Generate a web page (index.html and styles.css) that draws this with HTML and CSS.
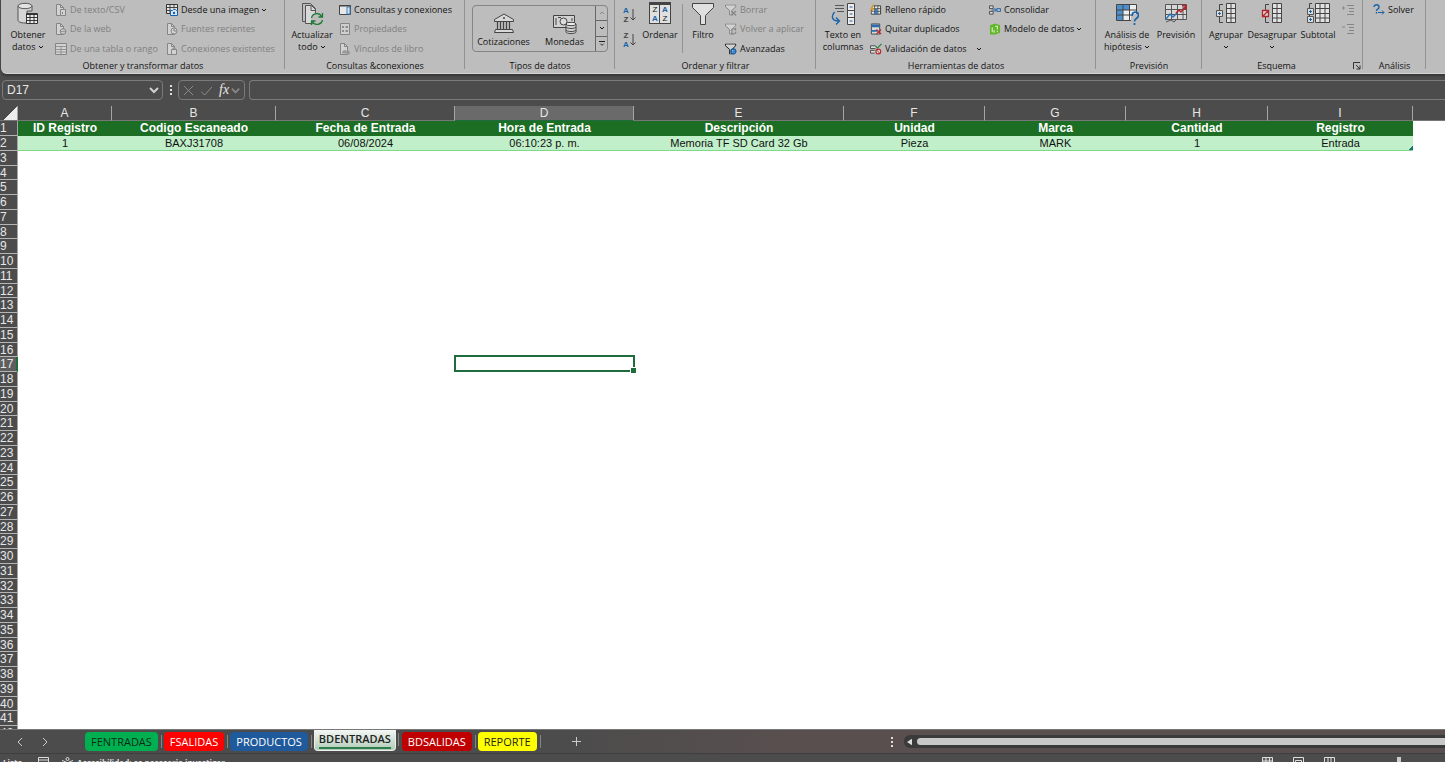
FILE: index.html
```html
<!DOCTYPE html>
<html lang="es">
<head>
<meta charset="utf-8">
<title>BDENTRADAS</title>
<link rel="stylesheet" href="styles.css">
</head>
<body>
<svg class="defs" aria-hidden="true">
  <symbol id="chev" viewBox="0 0 6 6"><path d="M1 2l2 2 2-2" fill="none" stroke="currentColor"/></symbol>
  <symbol id="page" viewBox="0 0 12 12"><path d="M1.500.500h4l3 3v8h-7z" fill="#d2d2d2" stroke="#858585"/><path d="M5.500.500v3h3" fill="none" stroke="#858585"/></symbol>
  <symbol id="csv" viewBox="0 0 12 12"><use href="#page"/><path d="M5.500 5.500h5v6h-5z" fill="#d2d2d2" stroke="#858585"/><path d="M7.500 8v2" stroke="#858585"/></symbol>
  <symbol id="web" viewBox="0 0 12 12"><use href="#page"/><circle cx="8" cy="8.500" r="2.800" fill="#c8c8c8" stroke="#858585"/><path d="M5 8.500h6" stroke="#858585" stroke-width=".7"/></symbol>
  <symbol id="recent" viewBox="0 0 12 12"><use href="#page"/><circle cx="8" cy="8" r="3" fill="#d2d2d2" stroke="#858585"/><path d="M8 6v2h2" fill="none" stroke="#858585"/></symbol>
  <symbol id="conn" viewBox="0 0 12 12"><use href="#page"/><path d="M5.500 6.500h5v5h-5zM7 6.500v-1.500h2v1.500" fill="#d2d2d2" stroke="#858585"/></symbol>
  <symbol id="link" viewBox="0 0 12 12"><use href="#page"/><path d="M3 10.500c0-4 3-4 6-2v-1.500l2.500 3-2.500 2v-1.500z" fill="#999"/></symbol>
  <symbol id="tbl" viewBox="0 0 12 12"><path d="M.500.500h11v11H.500z" fill="#d2d2d2" stroke="#858585"/><path d="M.500 3.500h11M.500 6.500h11M.500 9h11M6 3v9" stroke="#858585" stroke-width=".8"/></symbol>
  <symbol id="img" viewBox="0 0 12 12"><path d="M.500.500h11v9H.500z" fill="#e4e4e4" stroke="#333"/><path d="M.500 3.500h11M.500 6.500h5M4 .500v9M8 .500v4" stroke="#333" stroke-width=".9"/><path d="M4.500 6.500h2l1-1h2l1 1h1v5h-7z" fill="#d8e6f2" stroke="#1b63a8"/><circle cx="8" cy="9" r="1.200" fill="#1b63a8"/></symbol>
  <symbol id="panel" viewBox="0 0 12 12"><path d="M.500 1.500h11v9H.500z" fill="#e8e8e8" stroke="#444"/><path d="M8 3h3v7H8z" fill="#d6e4f0" stroke="#3b83c0"/><path d="M0 2h12" stroke="#444"/></symbol>
  <symbol id="props" viewBox="0 0 12 12"><path d="M1.500.500h9v11h-9z" fill="#cfcfcf" stroke="#858585"/><path d="M3 4h2M3 8h2M6.500 4h2.500M6.500 8h2.500" stroke="#777" stroke-width="1.400"/></symbol>
  <symbol id="db" viewBox="0 0 24 24"><path d="M2 4v14c0 2 3 3 7 3h2V9h5V4" fill="#d6d6d6" stroke="#555"/><ellipse cx="9" cy="4" rx="7" ry="2.700" fill="#e2e2e2" stroke="#555"/><path d="M10.500 11.500h11v10h-11z" fill="#eee" stroke="#333"/><path d="M10 12.500h12M10.500 15.500h11M10.500 18.500h11M14 12v10M18 12v10" stroke="#333"/></symbol>
  <symbol id="refresh" viewBox="0 0 24 24"><path d="M2.500 1.500h8l5 5v3M2.500 1.500v18h3" fill="none" stroke="#555"/><path d="M5.500 3.500h6l4 4v14h-10z" fill="#d8d8d8" stroke="#555"/><path d="M11 3.500v5h5" fill="none" stroke="#555"/><circle cx="17" cy="17" r="6" fill="#bdbdbd"/><path d="M11.500 16c1-5 8-6 10-1.500M22.500 11v4h-4M22.500 18c-1 5-8 6-10 1.500M11.500 23v-4h4" fill="none" stroke="#1d7a35" stroke-width="1.300"/></symbol>
  <symbol id="bank" viewBox="0 0 24 24"><path d="M2.500 8.500L12 3l9.500 5.500v2h-19zM3.500 18.500h17l1 3h-19z" fill="#d8d8d8" stroke="#444"/><path d="M5.500 11v7M8.500 11v7M11.500 11v7M14.500 11v7M17.500 11v7" stroke="#444" stroke-width="1.200"/><circle cx="12" cy="7" r="1" fill="#444"/></symbol>
  <symbol id="money" viewBox="0 0 24 24"><path d="M.500 4.500h21v12H.500z" fill="#d2d2d2" stroke="#444"/><path d="M3 7v7M19 7v3M5 6.500h3" stroke="#444"/><circle cx="10.500" cy="10.500" r="3.500" fill="#ddd" stroke="#444"/><path d="M13 13v8c0 2 10 2 10 0v-8" fill="#d2d2d2" stroke="#444"/><ellipse cx="18" cy="13" rx="5" ry="1.700" fill="#eee" stroke="#444"/><path d="M13 16c1 2 9 2 10 0M13 19c1 2 9 2 10 0" fill="none" stroke="#444"/></symbol>
  <symbol id="arrow" viewBox="0 0 6 14"><path d="M3 1v11M.500 9.500L3 12l2.500-2.500" fill="none" stroke="#444"/></symbol>
  <symbol id="funnel" viewBox="0 0 24 24"><path d="M1.500 1.500h21v4l-8 8v9h-5v-9l-8-8z" fill="#e0e0e0" stroke="#444"/></symbol>
  <symbol id="funs" viewBox="0 0 13 12"><path d="M.500.500h11v2l-4 4v5H5v-5l-4.500-4z" fill="#d2d2d2" stroke="currentColor"/></symbol>
  <symbol id="fclear" viewBox="0 0 13 12"><use href="#funs"/><path d="M7 7l5 5M12 7l-5 5" stroke="#858585" stroke-width="1.300"/></symbol>
  <symbol id="freap" viewBox="0 0 13 12"><use href="#funs"/><path d="M6.500 8c1-3 4-3 5-.500V5M12 9c-1 3-4 3-5 1v2" fill="none" stroke="#858585" stroke-width="1.200"/></symbol>
  <symbol id="fadv" viewBox="0 0 13 12"><use href="#funs"/><circle cx="9" cy="8.500" r="2.500" fill="#d8e6f2" stroke="#1b63a8" stroke-width="1.700"/><path d="M9 5v7M5.500 8.500h7" stroke="#1b63a8" stroke-width=".8"/></symbol>
  <symbol id="textcol" viewBox="0 0 24 24"><path d="M4 3.500h9M4 6.500h9M6 9.500h7" stroke="#555"/><path d="M3.500 10c-4 5-2 9 4 9M5 15.500L8.500 19 5 22.500" fill="none" stroke="#1b63a8" stroke-width="1.400"/><path d="M16.500 1.500h7v21h-7z" fill="#eee" stroke="#444"/><path d="M16.500 8.500h7M16.500 15.500h7" stroke="#444"/><path d="M18.500 5h3M18.500 12h3M18.500 19h3" stroke="#1b63a8"/></symbol>
  <symbol id="flash" viewBox="0 0 13 12"><path d="M3.500 1.500h8v9h-10v-6z" fill="#eee" stroke="#333"/><path d="M1.500 4.500h10M1.500 7.500h10M5 1.500v9M8.500 1.500v9" stroke="#333" stroke-width=".8"/><path d="M5 5h3v6H5z" fill="#3977b5"/><path d="M3 0L0 6h2l-1 4 4-6H3l2-4z" fill="#d49a3a"/></symbol>
  <symbol id="dup" viewBox="0 0 13 12"><path d="M1.500.500h9v11h-9z" fill="#d8d8d8" stroke="#444"/><path d="M2 1h8v3H2zM2 7h6v2H2z" fill="#2a6cb0"/><path d="M7 6.500l5 5M12 6.500l-5 5" stroke="#b3262c" stroke-width="1.300"/></symbol>
  <symbol id="valid" viewBox="0 0 13 12"><path d="M6 2.500H.500v3H6M5 7.500H.500v3H5" fill="#ddd" stroke="#444"/><path d="M6 3l2 2 4.500-4.500" fill="none" stroke="#1d7a35" stroke-width="1.200"/><circle cx="9" cy="8.700" r="2.600" fill="#ddd" stroke="#b3262c" stroke-width="1.200"/><path d="M7 7l4 4" stroke="#b3262c"/></symbol>
  <symbol id="consol" viewBox="0 0 13 12"><path d="M.500 1.500h4v3h-4zM.500 7.500h4v3h-4z" fill="#ddd" stroke="#444"/><path d="M3 6h5M6 4l2 2-2 2M8.500 4.500h4v3h-4z" fill="none" stroke="#1b63a8"/></symbol>
  <symbol id="model" viewBox="0 0 13 12"><path d="M1 2l6-2 5 2v8l-5 2H1z" fill="#63b52b"/><path d="M3.500 4v5.500M5.500 7v3M9 2.500v4M9 8v1.500M6.500 3h2" stroke="#d9efc4" stroke-width="1.200"/></symbol>
  <symbol id="whatif" viewBox="0 0 24 24"><path d="M1.500 2.500h20v16h-20z" fill="#eee" stroke="#444"/><path d="M2 3h6v15H2zM8 3h6v5H8z" fill="#4d8fcc"/><path d="M1.500 8h20M1.500 13h20M8 2.500v16M14.500 2.500v16" stroke="#444"/><path d="M16 13v12h8V11z" fill="#bdbdbd"/><path d="M17 14c0-5 6.500-5 6.500-1s-4 3-4 6.500M19.500 21v2" fill="none" stroke="#1b63a8" stroke-width="1.700"/></symbol>
  <symbol id="forecast" viewBox="0 0 24 24"><path d="M1.500 2.500h21v15h-21z" fill="#d8d8d8" stroke="#555"/><path d="M1.500 7.500h21M1.500 12.500h21M7.500 2.500v15M13.500 2.500v15M19 2.500v15" stroke="#555"/><path d="M2 17l4-5 3 3 4-4" fill="none" stroke="#2a78c0" stroke-width="1.500"/><path d="M12 11l3-3 2 2 5-6M18 3.500h4v4" fill="none" stroke="#b3262c" stroke-width="1.500"/><path d="M2 20l5-2 3 2 3-3" fill="none" stroke="#555"/></symbol>
  <symbol id="group" viewBox="0 0 24 24"><path d="M9 2.500H5.500v18H9" fill="none" stroke="#444"/><path d="M12.500 1.500h9v19h-9zM12.500 6.500h9M12.500 11.500h9M12.500 16h9M17 1.500v19" fill="#e2e2e2" stroke="#444"/><path d="M2.500 8.500h6v6h-6z" fill="#ddd" stroke="#555"/><path d="M4 11.500h3M5.500 10v3" stroke="#1b63a8"/></symbol>
  <symbol id="ungroup" viewBox="0 0 24 24"><path d="M9 2.500H5.500v18H9" fill="none" stroke="#444"/><path d="M12.500 1.500h9v19h-9zM12.500 6.500h9M12.500 11.500h9M12.500 16h9M17 1.500v19" fill="#e2e2e2" stroke="#444"/><path d="M2.500 8.500h6v6h-6zM2.500 14.500l6-6" fill="#ddd" stroke="#b3262c" stroke-width="1.300"/></symbol>
  <symbol id="subtotal" viewBox="0 0 24 24"><path d="M6 1.500H3.500v19" fill="none" stroke="#444"/><path d="M9.500 1.500h14v19h-14zM9.500 6.500h14M9.500 11.500h14M9.500 16h14M14 1.500v19M19 1.500v19" fill="#e2e2e2" stroke="#444"/><path d="M1.500 6.500h6v6h-6zM1.500 14.500h6v6h-6z" fill="#ddd" stroke="#555"/><path d="M3 9.500h3M4.500 8v3M3 17.500h3M4.500 16v3" stroke="#1b63a8"/></symbol>
  <symbol id="plusl" viewBox="0 0 12 12"><path d="M0 4h3M1.500 2.500v3M5 1.500h7M7 4.500h5M7 7.500h5M5 10.500h7" stroke="#858585"/></symbol>
  <symbol id="minusl" viewBox="0 0 12 12"><path d="M0 4h3M5 1.500h7M7 4.500h5M7 7.500h5M5 10.500h7" stroke="#858585"/></symbol>
  <symbol id="solver" viewBox="0 0 12 12"><path d="M1 3c0-3 5-3 5 0S3.500 4.500 3.500 7M3.500 8v1.500" fill="none" stroke="#1b63a8" stroke-width="1.400"/><path d="M5 8.500h6M9 6.500l2 2-2 2" fill="none" stroke="#1b63a8"/></symbol>
  <symbol id="launch" viewBox="0 0 8 8"><path d="M.500 7V.500H7M3 3l4 4M7 3.500V7H3.500" fill="none" stroke="#333"/></symbol>
</svg>

<header class="ribbon">
  <section class="group">
    <div class="tools">
      <button class="big w54"><svg class="i24"><use href="#db"/></svg><span>Obtener<br>datos <svg class="chev"><use href="#chev"/></svg></span></button>
      <div class="stack from">
        <button class="small" disabled><svg class="i12"><use href="#csv"/></svg>De texto/CSV</button>
        <button class="small" disabled><svg class="i12"><use href="#web"/></svg>De la web</button>
        <button class="small" disabled><svg class="i12"><use href="#tbl"/></svg>De una tabla o rango</button>
      </div>
      <div class="stack">
        <button class="small"><svg class="i12"><use href="#img"/></svg>Desde una imagen<svg class="chev"><use href="#chev"/></svg></button>
        <button class="small" disabled><svg class="i12"><use href="#recent"/></svg>Fuentes recientes</button>
        <button class="small" disabled><svg class="i12"><use href="#conn"/></svg>Conexiones existentes</button>
      </div>
    </div>
    <h2>Obtener y transformar datos</h2>
  </section>
  <section class="group">
    <div class="tools">
      <button class="big w54"><svg class="i24"><use href="#refresh"/></svg><span>Actualizar<br>todo <svg class="chev"><use href="#chev"/></svg></span></button>
      <div class="stack">
        <button class="small"><svg class="i12"><use href="#panel"/></svg>Consultas y conexiones</button>
        <button class="small" disabled><svg class="i12"><use href="#props"/></svg>Propiedades</button>
        <button class="small" disabled><svg class="i12"><use href="#link"/></svg>Vínculos de libro</button>
      </div>
    </div>
    <h2>Consultas &amp;conexiones</h2>
  </section>
  <section class="group">
    <div class="tools centered">
      <div class="gallery">
        <button class="type"><svg class="i24"><use href="#bank"/></svg>Cotizaciones</button>
        <button class="type"><svg class="i24"><use href="#money"/></svg>Monedas</button>
        <div class="scroller">
          <button disabled aria-label="Anterior"><svg class="chev up"><use href="#chev"/></svg></button>
          <button aria-label="Siguiente"><svg class="chev"><use href="#chev"/></svg></button>
          <button aria-label="Más"><svg class="chev more"><use href="#chev"/></svg></button>
        </div>
      </div>
    </div>
    <h2>Tipos de datos</h2>
  </section>
  <section class="group">
    <div class="tools">
      <div class="sorts">
        <button aria-label="Ordenar de A a Z"><span class="az"><b>A</b><span>Z</span></span><svg class="arrow"><use href="#arrow"/></svg></button>
        <button aria-label="Ordenar de Z a A"><span class="az"><span>Z</span><b>A</b></span><svg class="arrow"><use href="#arrow"/></svg></button>
      </div>
      <button class="big w44"><span class="sortbox"><span>Z</span><b>A</b><b>A</b><span>Z</span></span><span>Ordenar</span></button>
      <div class="rule"></div>
      <button class="big w40"><svg class="i24"><use href="#funnel"/></svg><span>Filtro</span></button>
      <div class="stack filters">
        <button class="small" disabled><svg class="i12"><use href="#fclear"/></svg>Borrar</button>
        <button class="small" disabled><svg class="i12"><use href="#freap"/></svg>Volver a aplicar</button>
        <button class="small"><svg class="i12"><use href="#fadv"/></svg>Avanzadas</button>
      </div>
    </div>
    <h2>Ordenar y filtrar</h2>
  </section>
  <section class="group">
    <div class="tools">
      <button class="big w54"><svg class="i24"><use href="#textcol"/></svg><span>Texto en<br>columnas</span></button>
      <div class="stack clean">
        <button class="small"><svg class="i12"><use href="#flash"/></svg>Relleno rápido</button>
        <button class="small"><svg class="i12"><use href="#dup"/></svg>Quitar duplicados</button>
        <button class="small"><svg class="i12"><use href="#valid"/></svg>Validación de datos<svg class="chev far"><use href="#chev"/></svg></button>
      </div>
      <div class="stack">
        <button class="small"><svg class="i12"><use href="#consol"/></svg>Consolidar</button>
        <button class="small"><svg class="i12"><use href="#model"/></svg>Modelo de datos<svg class="chev"><use href="#chev"/></svg></button>
      </div>
    </div>
    <h2>Herramientas de datos</h2>
  </section>
  <section class="group">
    <div class="tools centered">
      <button class="big w54"><svg class="i24"><use href="#whatif"/></svg><span>Análisis de<br>hipótesis <svg class="chev"><use href="#chev"/></svg></span></button>
      <button class="big w44"><svg class="i24"><use href="#forecast"/></svg><span>Previsión</span></button>
    </div>
    <h2>Previsión</h2>
  </section>
  <section class="group">
    <div class="tools">
      <button class="big w48"><svg class="i24"><use href="#group"/></svg><span>Agrupar<br><svg class="chev"><use href="#chev"/></svg></span></button>
      <button class="big w44"><svg class="i24"><use href="#ungroup"/></svg><span>Desagrupar<br><svg class="chev"><use href="#chev"/></svg></span></button>
      <button class="big w48"><svg class="i24"><use href="#subtotal"/></svg><span>Subtotal</span></button>
      <div class="stack">
        <button class="small" disabled aria-label="Mostrar detalle"><svg class="i12"><use href="#plusl"/></svg></button>
        <button class="small" disabled aria-label="Ocultar detalle"><svg class="i12"><use href="#minusl"/></svg></button>
      </div>
    </div>
    <h2 class="inset">Esquema</h2>
    <button class="launch" aria-label="Configuración de esquema"><svg><use href="#launch"/></svg></button>
  </section>
  <section class="group">
    <div class="tools">
      <div class="stack solver">
        <button class="small"><svg class="i12"><use href="#solver"/></svg>Solver</button>
      </div>
    </div>
    <h2>Análisis</h2>
  </section>
</header>

<div class="formula-bar">
  <div class="box name">
    <input aria-label="Cuadro de nombres" value="D17">
    <button aria-label="Nombres"><svg class="drop"><use href="#chev"/></svg></button>
  </div>
  <span class="dots"></span>
  <div class="box fx">
    <button class="dim" aria-label="Cancelar"><svg viewBox="0 0 12 12"><path d="M1 1l10 10M11 1L1 11" fill="none" stroke="currentColor"/></svg></button>
    <button class="dim" aria-label="Introducir"><svg viewBox="0 0 12 12"><path d="M0 7l4 4 8-9" fill="none" stroke="currentColor"/></svg></button>
    <button class="fn" aria-label="Insertar función">fx</button>
    <button class="dim" aria-label="Funciones"><svg class="drop"><use href="#chev"/></svg></button>
  </div>
  <input class="box formula" aria-label="Barra de fórmulas">
</div>

<main class="sheet">
  <table>
    <colgroup><col class="ch"><col class="ca"><col class="cb"><col class="cc"><col class="cc"><col class="ce"><col class="cf"><col class="cf"><col class="chh"><col class="ci"><col></colgroup>
    <thead>
      <tr><th class="corner"></th><th>A</th><th>B</th><th>C</th><th class="sel">D</th><th>E</th><th>F</th><th>G</th><th>H</th><th>I</th><th></th></tr>
    </thead>
    <tbody id="rows">
      <tr class="titles"><th>1</th><td>ID Registro</td><td>Codigo Escaneado</td><td>Fecha de Entrada</td><td>Hora de Entrada</td><td>Descripción</td><td>Unidad</td><td>Marca</td><td>Cantidad</td><td>Registro</td><td></td></tr>
      <tr class="entry"><th>2</th><td>1</td><td>BAXJ31708</td><td>06/08/2024</td><td>06:10:23 p. m.</td><td>Memoria TF SD Card 32 Gb</td><td>Pieza</td><td>MARK</td><td>1</td><td class="end">Entrada</td><td></td></tr>
    </tbody>
  </table>
</main>

<nav class="tabs">
  <div class="arrows">
    <button aria-label="Hoja anterior"><svg viewBox="0 0 8 8"><path d="M6 0L2 4l4 4" fill="none" stroke="currentColor"/></svg></button>
    <button aria-label="Hoja siguiente"><svg viewBox="0 0 8 8"><path d="M2 0l4 4-4 4" fill="none" stroke="currentColor"/></svg></button>
  </div>
  <button class="tab green">FENTRADAS</button>
  <button class="tab red">FSALIDAS</button>
  <button class="tab blue">PRODUCTOS</button>
  <button class="tab active"><span>BDENTRADAS</span></button>
  <button class="tab dark">BDSALIDAS</button>
  <button class="tab yellow">REPORTE</button>
  <button class="add" aria-label="Hoja nueva"><svg viewBox="0 0 9 9"><path d="M4.500 0v9M0 4.500h9" stroke="currentColor"/></svg></button>
  <span class="dots"></span>
  <div class="hscroll"><svg viewBox="0 0 6 8"><path d="M6 0v8L0 4z" fill="#ddd"/></svg><div class="thumb"></div></div>
</nav>

<footer class="status">
  <span class="ready">Listo</span>
  <svg class="macro" viewBox="0 0 12 12"><path d="M.500.500h10v10H.500zM0 3h11M3 5.500h5" fill="none" stroke="#ddd"/></svg>
  <svg class="access" viewBox="0 0 12 12"><circle cx="5.500" cy="2" r="1.500" fill="none" stroke="#ddd"/><path d="M0 3.500l4 1.500v6M11 3.500L7 5v6" fill="none" stroke="#ddd"/></svg>
  <span>Accesibilidad: es necesario investigar</span>
  <div class="views">
    <button class="on" aria-label="Normal"><svg viewBox="0 0 11 11"><path d="M.500.500h10v10H.500zM0 4h11M0 7.500h11M4 0v11M7.500 0v11" fill="none" stroke="#ddd"/></svg></button>
    <button aria-label="Diseño de página"><svg viewBox="0 0 11 11"><path d="M.500.500h10v10H.500zM2.500 3.500h6v7h-6zM4 5.500h3" fill="none" stroke="#ddd"/></svg></button>
    <button aria-label="Saltos de página"><svg viewBox="0 0 11 11"><path d="M.500.500h10v10H.500zM4 0v6M7 0v6" fill="none" stroke="#ddd"/></svg></button>
  </div>
  <span class="knob"></span>
</footer>
<script src="sheet.js"></script>
</body>
</html>
```
FILE: styles.css
```css
* { box-sizing: border-box; }
body {
  margin: 0;
  height: 100vh;
  display: flex;
  flex-direction: column;
  overflow: hidden;
  background: #4d4c4c;
  font-family: "Open Sans", "Noto Sans", sans-serif;
  font-size: 9px;
  color: #141414;
}
button, input {
  font: inherit;
  color: inherit;
  background: none;
  border: 0;
  padding: 0;
  margin: 0;
}
svg { display: block; flex: none; }
.defs { position: absolute; width: 0; height: 0; }

.ribbon {
  display: grid;
  grid-template-columns: 284fr 180fr 150fr 201fr 280fr 106fr 161fr 63fr 19fr;
  flex: none;
  height: 74px;
  margin-left: 1px;
  background: #bdbdbd;
  border-bottom: 1px solid #d2d2d2;
  border-radius: 0 0 0 6px;
  box-shadow: 0 2px 2px #383838;
  font-weight: 500;
}
.group {
  position: relative;
  display: flex;
  flex-direction: column;
  min-width: 0;
}
.group::after {
  content: "";
  position: absolute;
  right: 0;
  top: 0;
  height: 69px;
  border-right: 1px solid #939393;
}
.group h2 {
  margin: 0;
  font-size: 9px;
  font-weight: 500;
  line-height: 12px;
  text-align: center;
  white-space: nowrap;
}
.group .inset { padding-right: 12px; }
.tools { display: flex; height: 60px; }
.tools.centered { justify-content: center; }
.big {
  display: flex;
  flex-direction: column;
  align-items: center;
  gap: 3px;
  padding-top: 2px;
  line-height: 12px;
  white-space: nowrap;
}
.w54 { width: 54px; }
.w48 { width: 48px; }
.w44 { width: 44px; }
.w40 { width: 40px; }
.i24 { width: 24px; height: 24px; }
.i12 { width: 12px; height: 12px; }
.chev { display: inline-block; width: 6px; height: 6px; }
.stack { display: flex; flex-direction: column; }
.from { width: 111px; }
.filters { padding-left: 2px; }
.clean { width: 119px; }
.solver { padding-left: 10px; }
.small {
  display: flex;
  align-items: center;
  gap: 3px;
  height: 20px;
  line-height: 12px;
  white-space: nowrap;
}
.small .chev { margin-left: -1px; }
.small .far { margin-left: 6px; }
.small:disabled { color: #808080; }
.stack .small:first-child { height: 19px; }

.gallery {
  display: flex;
  margin-top: 5px;
  height: 47px;
  width: 136px;
  border: 1px solid #858585;
  border-radius: 4px;
  overflow: hidden;
}
.type {
  flex: 1;
  display: flex;
  flex-direction: column;
  align-items: center;
  gap: 1px;
  padding-top: 5px;
  line-height: 12px;
}
.scroller { display: flex; flex-direction: column; width: 12px; }
.scroller button {
  flex: 1;
  display: grid;
  place-items: center;
  border-left: 1px solid #666;
  border-bottom: 1px solid #666;
}
.scroller button:last-child { border-bottom: 0; }
.scroller button:disabled { color: #888; }
.up { transform: rotate(180deg); }
.more { border-top: 1px solid #222; }

.sorts { display: flex; flex-direction: column; gap: 7px; padding: 6px 0 0 8px; width: 23px; }
.sorts button { display: flex; align-items: center; gap: 1px; height: 18px; }
.az, .sortbox { font-family: "Liberation Sans", sans-serif; font-size: 8px; line-height: 9px; }
.az { display: flex; flex-direction: column; font-weight: 700; color: #444; }
.az b, .sortbox b { color: #1b63a8; font-weight: 700; }
.arrow { width: 6px; height: 14px; }
.sortbox {
  display: grid;
  grid-template-columns: 1fr 1fr;
  align-content: center;
  width: 22px;
  height: 22px;
  margin-bottom: 2px;
  border: 1px solid #444;
  border-top-width: 3px;
  background: linear-gradient(90deg, #e0e0e0 9px, #444 9px, #444 10px, #e0e0e0 10px);
}
.rule { height: 49px; margin-top: 4px; border-left: 1px solid #939393; }
.launch { position: absolute; right: 2px; bottom: 3px; }
.launch svg { width: 8px; height: 8px; }

.formula-bar {
  display: flex;
  flex: none;
  gap: 4px;
  height: 32px;
  padding: 6px 0 6px 2px;
  color: #e8e8e8;
  font-size: 12px;
}
.box {
  display: flex;
  align-items: center;
  border: 1px solid #7b7b7b;
  border-radius: 4px;
}
.name { width: 161px; padding: 0 2px 0 4px; }
.name input { flex: 1; min-width: 0; font-family: "Liberation Sans", sans-serif; }
.drop { width: 12px; height: 12px; }
.drop use { stroke-width: 1px; }
.name .drop, .fx .drop { opacity: .85; }
.dots {
  width: 7px;
  height: 10px;
  align-self: center;
  background: radial-gradient(circle, #e0e0e0 1px, transparent 1px) center / 4px 4px repeat-y;
}
.fx { width: 67px; padding-left: 4px; gap: 7px; }
.fx svg { width: 11px; height: 11px; }
.fx .drop { margin-left: -6px; }
.dim { color: #929292; }
.fn { font: italic 14px "Liberation Serif", serif; }
.formula { flex: 1; min-width: 0; border-right: 0; border-radius: 4px 0 0 4px; }

.sheet {
  flex: 1;
  min-height: 0;
  overflow: hidden;
  font-family: "Liberation Sans", Arial, sans-serif;
}
table { width: 100%; table-layout: fixed; border-collapse: separate; border-spacing: 0; background: #fff; }
.ch { width: 18px; }
.ca { width: 94px; }
.cb { width: 164px; }
.cc { width: 179px; }
.ce { width: 210px; }
.cf { width: 141px; }
.chh { width: 142px; }
.ci { width: 145px; }
th, td { padding: 0; text-align: center; line-height: 13px; white-space: nowrap; }
th { background: #4d4c4c; color: #e6e6e6; font-size: 12px; font-weight: 400; }
thead th { height: 15px; line-height: 14px; border-right: 1px solid #a5a5a5; border-bottom: 1px solid #777; }
thead th:last-child { border-right: 0; }
thead th.sel { background: #6a6a6a; border-bottom-color: #1e6b3e; }
thead .corner { background: linear-gradient(135deg, #4d4c4c 55%, #eee 55%); }
tbody tr { height: 15px; }
tbody tr:nth-child(4n) { height: 14px; }
tbody tr:nth-child(4n) th { line-height: 12px; }
tbody th { border-bottom: 1px solid #b5b5b5; border-right: 1px solid #a5a5a5; text-align: left; }
tbody th.sel { background: #5e5e5e; border-right: 2px solid #1e6b3e; }
.titles td { background: #1b6e23; color: #fff; font-size: 12px; font-weight: 700; }
.entry td { background: #c1efc9; color: #111; font-size: 11px; border-bottom: 1px solid #7fd98b; }
.titles td:last-child, .entry td:last-child { background: #fff; border: 0; }
.entry .end { background: linear-gradient(135deg, transparent 50%, #1d6f70 50%) right bottom / 4px 4px no-repeat #c1efc9; }
.cursor { position: relative; }
.cursor::before { content: ""; position: absolute; inset: -2px -1px 0; border: 2px solid #1e6b3e; }
.cursor::after { content: ""; position: absolute; right: -2px; bottom: -1px; width: 5px; height: 5px; background: #1e6b3e; border: 1px solid #fff; border-width: 1px 0 0 1px; }

.tabs {
  display: flex;
  flex: none;
  align-items: center;
  height: 25px;
  border-top: 1px solid #777;
  border-bottom: 1px solid #3e3e3e;
  background: linear-gradient(90deg, #4d4c4c 40%, #594f4f 55%);
  color: #ccc;
  font-size: 11px;
}
.arrows { display: flex; gap: 17px; width: 82px; padding-left: 16px; }
.arrows svg { width: 8px; height: 8px; }
.tab {
  position: relative;
  height: 19px;
  margin: 0 3px;
  padding: 0 6px;
  border-radius: 4px;
  line-height: 18px;
}
.tab::after { content: ""; position: absolute; right: -4px; top: 3px; height: 13px; border-right: 1px solid #858585; }
.green { background: #00b050; color: #0d2b18; }
.red { background: #fe0000; color: #fff; }
.blue { background: #1f5a9c; color: #fff; }
.dark { background: #c00000; color: #fff; }
.yellow { background: #ffff00; color: #222; }
.active {
  align-self: flex-start;
  height: 21px;
  padding: 0 4px;
  border: 1px solid #eee;
  border-top: 0;
  border-radius: 0 0 4px 4px;
  background: linear-gradient(#f4f7f4, #b0cbb6);
  color: #222;
  font-weight: 600;
}
.active span { display: block; line-height: 16px; border-bottom: 2px solid #2c7d4c; }
.add { margin: 0 auto 0 32px; }
.add svg { width: 9px; height: 9px; }
.hscroll {
  display: flex;
  align-items: center;
  gap: 5px;
  width: 38%;
  max-width: 541px;
  height: 13px;
  margin-left: 9px;
  padding-left: 3px;
  background: #3a3a3a;
  border-radius: 6px 0 0 6px;
}
.hscroll svg { width: 5px; height: 8px; }
.thumb { flex: 1; height: 7px; border-radius: 4px 0 0 4px; background: #c8c8c8; }

.status {
  display: flex;
  flex: none;
  height: 8px;
  padding-top: 3px;
  overflow: hidden;
  line-height: 12px;
  color: #e0e0e0;
  font-size: 8px;
  font-weight: 700;
}
.ready { width: 38px; padding-left: 3px; }
.macro, .access { width: 12px; height: 12px; margin-right: 12px; }
.access { margin-right: 3px; }
.views { display: flex; gap: 20px; margin: 0 62px 0 auto; }
.views svg { width: 11px; height: 11px; }
.on { background: #5e5e5e; }
.knob { width: 4px; height: 10px; margin-right: 44px; background: #ccc; }
```
FILE: sheet.js
```js
const body = document.getElementById("rows");
const COLUMNS = 10;
for (let n = 3; n <= 42; n++) {
  const row = body.insertRow();
  const head = document.createElement("th");
  head.textContent = n;
  row.append(head);
  for (let c = 0; c < COLUMNS; c++) {
    const cell = row.insertCell();
    if (n === 17 && c === 3) cell.className = "cursor";
  }
  if (n === 17) head.className = "sel";
}
```
